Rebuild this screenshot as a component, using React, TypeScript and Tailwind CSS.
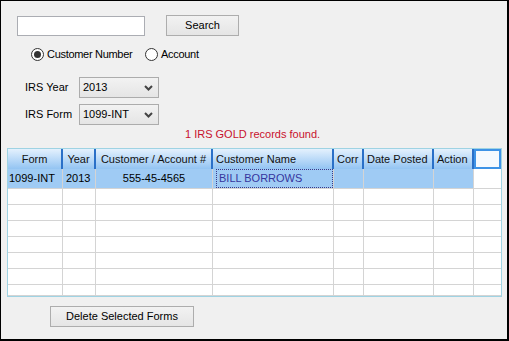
import React from "react";

const font = { fontFamily: '"Liberation Sans", Arial, sans-serif' };

function Chevron() {
  return (
    <svg width="9" height="6" viewBox="0 0 9 6" className="block">
      <polyline points="1,1 4.5,4.5 8,1" fill="none" stroke="#444" strokeWidth="2" />
    </svg>
  );
}

function Select({ value }: { value: string }) {
  return (
    <div className="flex h-[21px] w-[80px] items-center justify-between border border-[#acacac] bg-gradient-to-b from-[#f2f2f2] to-[#e5e5e5] pl-[3px] pr-[5px] text-black">
      <span>{value}</span>
      <Chevron />
    </div>
  );
}

function Radio({ checked }: { checked: boolean }) {
  return (
    <div className="flex h-[13px] w-[13px] items-center justify-center rounded-full border border-[#333] bg-white">
      {checked && <div className="h-[7px] w-[7px] rounded-full bg-[#333]" />}
    </div>
  );
}

const widths = [55, 33, 117, 121, 30, 70, 40, 27];

export default function App() {
  const headers: { t: string; c?: boolean }[] = [
    { t: "Form", c: true },
    { t: "Year", c: true },
    { t: "Customer / Account #", c: true },
    { t: "Customer Name" },
    { t: "Corr" },
    { t: "Date Posted" },
    { t: "Action" },
  ];
  const emptyRows = [16, 16, 16, 16, 16, 16, 11];
  return (
    <div
      style={font}
      className="box-border h-[341px] w-[509px] border-l border-t border-r-2 border-b-2 border-black bg-[#f0f0f0] text-[11px] leading-[13px] text-black"
    >
      {/* search row */}
      <div className="flex items-start pl-[16px] pt-[14px]">
        <div className="mt-[1px] h-[20px] w-[128px] border border-[#abadb3] bg-white" />
        <div className="ml-[21px] flex h-[21px] w-[73px] items-center justify-center border border-[#adadad] bg-gradient-to-b from-[#f2f2f2] to-[#e5e5e5]">
          Search
        </div>
      </div>

      {/* radio row */}
      <div className="mt-[12px] flex h-[13px] items-center pl-[30px]">
        <div className="flex w-[114px] items-center">
          <Radio checked />
          <span className="ml-[3px] tracking-[-0.3px]">Customer Number</span>
        </div>
        <div className="flex items-center">
          <Radio checked={false} />
          <span className="ml-[3px] tracking-[-0.3px]">Account</span>
        </div>
      </div>

      {/* IRS year */}
      <div className="mt-[16px] flex items-center pl-[24px]">
        <span className="w-[54px]">IRS Year</span>
        <Select value="2013" />
      </div>
      <div className="mt-[6px] flex items-center pl-[24px]">
        <span className="w-[54px]">IRS Form</span>
        <Select value="1099-INT" />
      </div>

      {/* status */}
      <div className="mt-[3px] h-[14px] pl-[184px] text-[#c8102e]">1 IRS GOLD records found.</div>

      {/* grid */}
      <div className="ml-[6px] mt-[6px] box-border h-[149px] w-[495px] overflow-hidden border border-[#9fd3e3] bg-white">
        {/* header */}
        <div className="flex h-[20px]">
          {headers.map((h, i) => (
            <div
              key={i}
              style={{ width: widths[i] }}
              className={`flex h-[20px] items-center border-r-2 border-[#2a70c8] bg-gradient-to-b from-[#e4f1fd] to-[#93c4f2] text-[#111] ${
                h.c ? "justify-center" : "pl-[3px]"
              }`}
            >
              {h.t}
            </div>
          ))}
          <div style={{ width: widths[7] }} className="h-[20px] border-2 border-[#3e93e6] bg-[#f6fafe]" />
        </div>
        {/* selected row */}
        <div className="flex h-[20px]">
          {["1099-INT", "2013", "555-45-4565", "BILL BORROWS", "", "", ""].map((t, i) => (
            <div
              key={i}
              style={{ width: widths[i] }}
              className={`flex h-[20px] items-center border-b border-r border-[#d4d4d4] bg-[#9fcbf4] ${
                i === 2 ? "justify-center" : i === 0 ? "pl-[1px]" : "pl-[3px]"
              } ${i === 3 ? "text-[#36369e]" : ""}`}
            >
              {i === 3 ? (
                <div className="flex h-full w-full items-center border border-dotted border-[#3a3a8a] pl-[2px]">{t}</div>
              ) : (
                t
              )}
            </div>
          ))}
          <div style={{ width: widths[7] }} className="h-[20px] border-b border-[#d4d4d4] bg-white" />
        </div>
        {emptyRows.map((h, r) => (
          <div key={r} className="flex" style={{ height: h }}>
            {widths.map((w, i) => (
              <div
                key={i}
                style={{ width: w, height: h }}
                className={`border-b border-[#d4d4d4] ${i < 7 ? "border-r" : ""}`}
              />
            ))}
          </div>
        ))}
      </div>

      {/* delete button */}
      <div className="ml-[49px] mt-[9px] flex h-[21px] w-[144px] items-center justify-center border border-[#adadad] bg-gradient-to-b from-[#f2f2f2] to-[#e5e5e5]">
        Delete Selected Forms
      </div>
    </div>
  );
}
